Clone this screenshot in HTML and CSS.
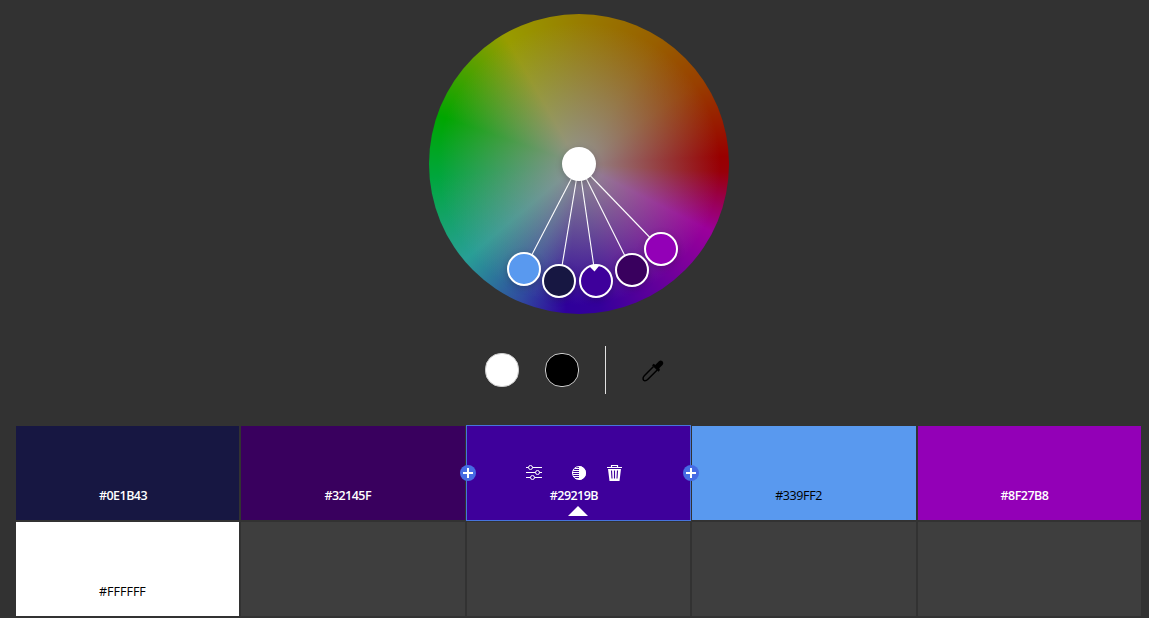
FILE: index.html
```html
<!DOCTYPE html>
<html lang="en">
<head>
<meta charset="utf-8">
<title>Color wheel</title>
<link rel="stylesheet" href="styles.css">
</head>
<body>
<main class="app">
  <section class="wheel">
    <svg class="markers" viewBox="0 0 300 300">
      <g class="spokes">
        <path d="M150 150L95.500 255"/><path d="M150 150L130.500 267"/><path d="M150 150L167 267"/><path d="M150 150L203 256"/><path d="M150 150L232 235"/>
      </g>
      <g class="handles">
        <circle cx="95" cy="255" r="16" fill="#5999ef"/>
        <circle cx="130" cy="267" r="16" fill="#171742"/>
        <circle cx="167" cy="267" r="16" fill="#3e009b"/>
        <circle cx="203" cy="256" r="16" fill="#39005e"/>
        <circle cx="232" cy="235" r="16" fill="#9300b7"/>
        <circle class="hub" cx="150" cy="150" r="17"/>
      </g>
      <path class="base-mark" d="M160.500 252.500Q165 250 170 252L165.500 257.500Z"/>
    </svg>
  </section>
  <section class="tools">
    <button class="dot white" aria-label="White"></button>
    <button class="dot black" aria-label="Black"></button>
    <span class="divider"></span>
    <button class="picker" aria-label="Pick a color">
      <svg width="22" height="22" viewBox="0 0 22 22">
        <path d="M11.500 6.500L2.300 15.700Q.8 17.200 1.100 19.200Q1.300 20.800 2.900 20.700Q4.500 20.700 5.900 19.300L15.200 10" fill="none" stroke="#000" stroke-width="1.500"/>
        <path d="M10 5.300L11.800 3.700L13.200 4.900L16.700 1.400Q18.500-.1 20.200 1Q22.200 2.500 20.500 4.900L17.200 8.300L18 10L16.500 11.700Z"/>
      </svg>
    </button>
  </section>
  <section class="swatches">
    <div class="swatch navy"><span class="hex">#0E1B43</span></div>
    <div class="swatch plum"><span class="hex">#32145F</span></div>
    <div class="swatch indigo selected">
      <div class="actions">
        <svg width="16" height="16" viewBox="0 0 16 16" fill="none" stroke="#fff" stroke-width="1">
          <path d="M0 2.500H2.500M6.500 2.500H16M0 7.500H9.500M13.500 7.500H16M0 12.500H4.500M8.500 12.500H16"/>
          <circle cx="4.500" cy="2.500" r="2"/><circle cx="11.500" cy="7.500" r="2"/><circle cx="6.500" cy="12.500" r="2"/>
        </svg>
        <svg class="contrast" width="14" height="14" viewBox="0 0 14 14">
          <circle cx="7" cy="7" r="6.500" fill="none" stroke="#fff"/>
          <path d="M7 0A7 7 0 0 1 7 14Z" fill="#fff"/>
          <path d="M3 2.500H7M1 4.500H7M0 6.500H7M1 8.500H7M1 10.500H7M3 12.500H7" stroke="#fff" stroke-width="1.100"/>
        </svg>
        <svg class="trash" width="15" height="16" viewBox="0 0 15 16">
          <path d="M4.500 2V.5H10.500V2M0 2.500H15" fill="none" stroke="#fff" stroke-width="1.200"/>
          <path d="M1 4H14L12.500 16H2.500Z" fill="#fff"/>
          <path d="M4.500 5.500L5 13.500M7.500 5.500V13.500M10.500 5.500L10 13.500" stroke="#3e009b" stroke-width="1.100"/>
        </svg>
      </div>
      <span class="hex">#29219B</span>
      <svg class="base-arrow" width="20" height="10" viewBox="0 0 20 10"><path d="M0 10L10 0L20 10Z" fill="#fff"/></svg>
      <button class="add before" aria-label="Add color before"></button>
      <button class="add after" aria-label="Add color after"></button>
    </div>
    <div class="swatch sky"><span class="hex">#339FF2</span></div>
    <div class="swatch violet"><span class="hex">#8F27B8</span></div>
    <div class="swatch blank"><span class="hex">#FFFFFF</span></div>
    <div class="swatch"></div>
    <div class="swatch"></div>
    <div class="swatch"></div>
    <div class="swatch"></div>
  </section>
</main>
</body>
</html>
```
FILE: styles.css
```css
* { box-sizing: border-box; }
body { margin: 0; background: #323232; font-family: "Open Sans", sans-serif; }
button { border: 0; padding: 0; background: none; }
svg { display: block; }
.app { height: 618px; padding: 14px 8px 0 16px; overflow: hidden; }
.wheel {
  width: 300px;
  height: 300px;
  margin: 0 auto;
  border-radius: 50%;
  background:
    radial-gradient(circle closest-side, rgb(146 146 146) 0%, rgb(146 146 146 / 0) 94%),
    conic-gradient(#987d00 0deg, #985f00 32deg, #983f00 56deg, #980000 87deg, #980008 93deg, #9b009b 117deg, #34009b 172deg, #2f009b 185deg, #304a9f 203deg, #289f96 230deg, #00a63c 265deg, #00a600 289deg, #989c00 330deg, #987d00 360deg);
}
.markers { width: 300px; height: 300px; }
.spokes { stroke: #fff; stroke-width: 1.1; }
.handles { stroke: #fff; stroke-width: 2; filter: drop-shadow(0 2px 3px rgb(0 0 0 / .2)); }
.hub { fill: #fff; stroke: none; }
.base-mark { fill: #fff; }
.tools { display: flex; align-items: center; height: 48px; margin-top: 32px; padding-left: 469px; }
.dot { width: 34px; height: 34px; border: 1px solid #ccc; border-radius: 16px; }
.white { background: #fff; }
.black { margin-left: 26px; background: #000; }
.divider { width: 1px; height: 48px; margin-left: 26px; background: #e1e1e1; }
.picker { margin-left: 36px; padding-top: 1px; }
.swatches { display: grid; grid-template-columns: repeat(5, 1fr); grid-auto-rows: 94px; gap: 2px; margin-top: 32px; }
.swatch { position: relative; padding: 61px 0 0 83px; background: #3e3e3e; }
.hex { display: block; width: 60px; font-size: 12.5px; line-height: 18px; font-weight: 600; letter-spacing: -.55px; color: #fff; }
.navy { background: #171742; }
.plum { background: #39005e; }
.indigo { background: #3e009b; }
.sky { background: #5999ef; }
.violet { background: #9300b7; }
.blank { background: #fff; }
.sky .hex, .blank .hex { color: #000; font-weight: 500; }
.sky .hex { letter-spacing: -.4px; }
.blank .hex { letter-spacing: 0; }
.selected { z-index: 1; padding-top: 39px; outline: 1px solid #4774dc; }
.actions { display: flex; align-items: flex-start; height: 22px; margin-left: -24px; }
.contrast { margin: 1px 0 0 30px; }
.trash { margin-left: 21px; }
.base-arrow { margin: 1px 0 0 18px; }
.add { position: absolute; top: 39px; width: 16px; height: 16px; border-radius: 50%; background: linear-gradient(#fff, #fff) center / 10px 2px no-repeat, linear-gradient(#fff, #fff) center / 2px 10px no-repeat, #466be3; }
.before { left: -7px; }
.after { right: -9px; }
```
